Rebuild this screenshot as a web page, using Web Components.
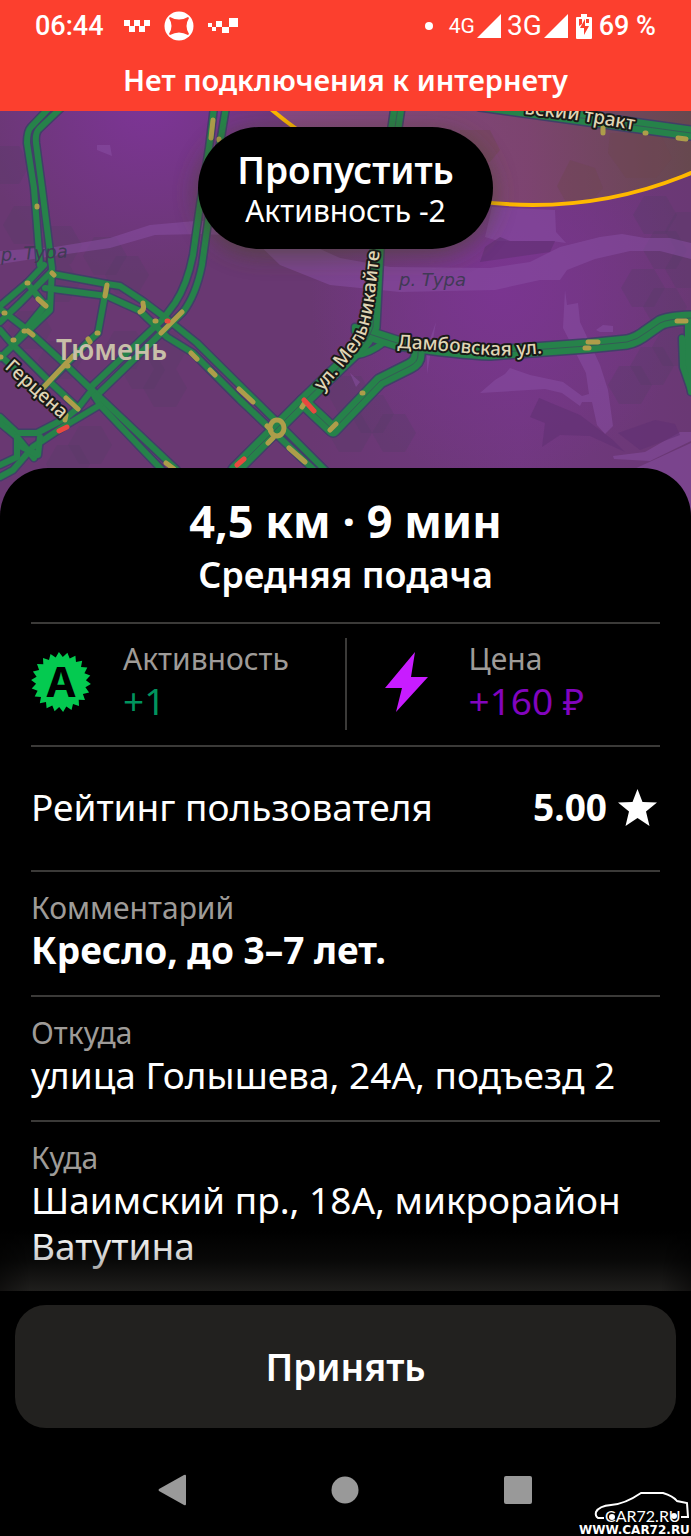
<!DOCTYPE html>
<html lang="ru">
<head>
<meta charset="utf-8">
<meta name="viewport" content="width=device-width, initial-scale=1">
<title>Новый заказ</title>
<style>
  body { margin: 0; background: #000; color: #fff; font-family: "Noto Sans", sans-serif; }
</style>
</head>
<body>
<order-screen></order-screen>

<script>
const define = (name, html, setup) => {
  const template = document.createElement('template');
  template.innerHTML = html;
  customElements.define(name, class extends HTMLElement {
    constructor() {
      super();
      this.attachShadow({ mode: 'open' }).append(template.content.cloneNode(true));
    }
    connectedCallback() { if (setup) setup(this, this.shadowRoot); }
  });
};

/* ---------- system status bar ---------- */
define('status-bar', `
<style>
  :host { display: flex; align-items: center; height: 52px; padding: 0 35px; box-sizing: border-box;
          font: 500 27px/52px Roboto, sans-serif; }
  svg { display: block; fill: #fff; flex: none; }
  .apps, .signals { display: flex; align-items: center; }
  .apps { gap: 14px; margin-left: 20px; flex: 1; }
  .signals { gap: 2px; margin-right: 7px; }
  .dot { width: 8px; height: 8px; border-radius: 50%; background: #fff; margin-right: 14px; }
  .net { font-weight: 400; }
  .s { font-size: 21px; }
  .l { font-size: 28px; margin-left: 4px; }
  .bat { margin-left: 6px; }
</style>
<span>06:44</span>
<div class="apps">
  <svg width="26" height="13" viewBox="0 0 26 13"><path d="M0 0h6v6H0zM10 0h6v6h-6zM20 0h6v6h-6zM5 6h6v6H5zM15 6h6v6h-6z"/></svg>
  <svg width="30" height="30" viewBox="0 0 30 30"><circle cx="15" cy="15" r="14.500"/><path fill="#fc3f2e" d="M6 6q9 5 18 0l1 1q-5 8 0 16l-1 1q-9-5-18 0l-1-1q5-8 0-16z"/></svg>
  <svg width="30" height="16" viewBox="0 0 30 16"><path d="M0 5h4v4H0zM4 9h4v4H4zM8 3h6v6H8zM14 9h7v6h-7zM21 0h9v9h-9z"/></svg>
</div>
<div class="signals">
  <span class="dot"></span>
  <span class="net s">4G</span>
  <svg width="24" height="24" viewBox="0 0 24 24"><path d="M24 0v24H0z"/></svg>
  <span class="net l">3G</span>
  <svg width="24" height="24" viewBox="0 0 24 24"><path d="M24 0v24H0z"/></svg>
  <svg class="bat" width="16" height="25" viewBox="0 0 16 25"><path d="M5 0h6v3h4q1 0 1 1v20q0 1-1 1H1q-1 0-1-1V4q0-1 1-1h4z"/><path d="M9 5 4 14h4v7l5-9H9z" fill="#fc3f2e"/><path d="M3 5h3v5L3 12zM10 5h3v4h-3z" fill="#fc3f2e"/></svg>
</div>
<span>69 %</span>`);

define('offline-banner', `
<style>
  :host { display: block; height: 59px; font-size: 29px; font-weight: 600; line-height: 56px; text-align: center; }
</style>
<slot></slot>`);

/* ---------- traffic map ---------- */
define('traffic-map', `
<style>
  :host { display: block; height: 407px; overflow: hidden; background: #6c3876; }
  svg { display: block; width: 100%; height: 100%; }
  text { font-family: "Noto Sans", sans-serif; }
  .case { fill: none; stroke: #413f68; stroke-width: 9; stroke-linejoin: round; stroke-linecap: round; }
  .road { fill: none; stroke: #26824a; stroke-width: 6; stroke-linejoin: round; stroke-linecap: round; }
  .wide { stroke-width: 13; } .case.wide { stroke-width: 16; }
  .seam { fill: none; stroke: #355b56; stroke-width: 1; }
  .slow { fill: none; stroke: #ad9d4a; stroke-width: 5; stroke-linecap: round; }
  .jam { fill: none; stroke: #e8493f; stroke-width: 5; stroke-linecap: round; }
  .street { font-size: 19px; font-weight: 500; fill: #e0d5b5; stroke: #191a18; stroke-width: 4; paint-order: stroke; stroke-linejoin: round; }
  .river { font: italic 18px "DejaVu Sans", sans-serif; fill: #403a55; }
</style>
<svg viewBox="0 111 691 407" preserveAspectRatio="xMidYMin slice" role="img" aria-label="Карта">
  <defs>
    <linearGradient id="tint" x1="0" y1="0" x2="1" y2="0">
      <stop offset="0" stop-color="#693872"/><stop offset=".45" stop-color="#693872"/><stop offset=".75" stop-color="#713880"/><stop offset="1" stop-color="#6a3874"/>
    </linearGradient>
    <radialGradient id="glow" cx="500" cy="290" r="190" gradientUnits="userSpaceOnUse">
      <stop offset="0" stop-color="#7a3590"/><stop offset="1" stop-color="#7a3590" stop-opacity="0"/>
    </radialGradient>
    <radialGradient id="glow2" cx="150" cy="95" r="180" gradientUnits="userSpaceOnUse">
      <stop offset="0" stop-color="#7e3498"/><stop offset="1" stop-color="#7e3498" stop-opacity="0"/>
    </radialGradient>
    <linearGradient id="zone" x1="280" y1="0" x2="691" y2="0" gradientUnits="userSpaceOnUse">
      <stop offset="0" stop-color="#8a4a86"/><stop offset=".6" stop-color="#7e466c"/><stop offset="1" stop-color="#664b48"/>
    </linearGradient>
    <filter id="soft" x="-20%" y="-40%" width="140%" height="180%"><feGaussianBlur stdDeviation="12"/></filter>
    <path id="hex" d="M-22 0-11-19H11L22 0 11 19H-11Z"/>
    <path id="p-meln" d="M322 392Q352 358 363 341 373 320 376 284L382 228"/>
    <path id="p-damb" d="M397 348Q440 350 475 354T560 351"/>
    <path id="p-tract" d="M505 112 570 119 634 130"/>
  </defs>
  <rect y="111" width="691" height="407" fill="url(#tint)"/>
  <rect y="111" width="691" height="407" fill="url(#glow)"/>
  <rect y="111" width="691" height="407" fill="url(#glow2)"/>
  <g id="cells"></g>
  <g fill="#8a50a5" opacity=".5">
    <path d="M0 251 55 247 110 238 150 225 195 221 270 221 300 240 340 258 390 267 490 268 530 262 560 247 600 237 622 234 645 238 670 238 691 243V259L660 251H630L595 259 567 270 560 280 540 280 495 290 400 292 330 285 280 265 250 236 200 234 155 235 110 248 60 255 0 264z"/>
    <path d="M492 207 555 210 556 232 566 243 552 241 520 241 498 241 485 237z"/>
    <path d="M565 290 567 305 578 303 580 322 600 365 608 390 613 426 605 434 597 425 592 402 582 402 580 406 562 393 545 389 480 393 495 380 505 374 510 368 530 375 563 382 582 396 589 394 586 373 563 328z"/>
    <path d="M613 456 645 452 680 432H691V441L650 461 614 459zM632 470 691 443V518H670zM97 145 110 145 112 156 97 150zM596 330 603 325 613 326V332L600 332zM427 348 436 322 427 374zM350 373 360 382 356 387z"/>
  </g>
  <g fill="#603073" opacity=".6"><path d="M485 247 500 237 510 241 555 241 550 252 480 262zM539 398 530 417 545 423 542 447 560 435 590 436 625 452 613 440 580 415zM618 433 655 420 675 424 680 435 640 450z"/></g>
  <circle cx="533" cy="-201" r="406" fill="url(#zone)" fill-opacity=".85"/>
  <g fill="#6d474f" opacity=".4">
    <path d="M460 130h30l10 20-10 12h-30zM570 160l25 8 8 20-14 16h-22l-10-18zM610 133h50l12 25-16 20h-30l-18-25z"/>
  </g>
  <g id="roads"></g>
  <g class="slow">
    <path d="M213 120 211 138M219 139v1M37 206v1M52 273l2 2M27 283h1M38 299 46 306M107 285 105 296M143 303v1M143 304q2 6-3 8M155 321h1M182 312 161 333M191 353 197 359M210 370 215 375M4 313h1M24 331h1M28 331 33 335M13 340h1M0 357h1M97 333h1M88 339 90 342M73 356 42 389M67 366h1M66 398 78 409M65 420 66 415M166 463 174 469M239 389 253 402M289 448 305 462M267 426l4 4M268 443 273 438M302 407 304 404M330 430 336 424M362 393h1M421 345h1M603 128v5M645 133h1M678 138 686 139M588 342h10M585 348h4M677 321h9"/>
    <ellipse cx="277" cy="428" rx="7" ry="8"/>
  </g>
  <path class="jam" d="M59 431 67 427M167 321h1M304 400 314 411M237 465 244 459"/>
  <circle cx="533" cy="-201" r="406" fill="none" stroke="#ffb800" stroke-width="4"/>
  <rect x="198" y="132" width="295" height="122" rx="61" fill="#49472c" opacity=".65" filter="url(#soft)"/>
  <text class="river" transform="rotate(-3 0 260)" x="1" y="261">р. Тура</text>
  <text class="river" x="399" y="286">р. Тура</text>
  <text class="street"><textPath href="#p-meln">ул. Мельникайте</textPath></text>
  <text class="street"><textPath href="#p-damb">Дамбовская ул.</textPath></text>
  <text class="street"><textPath href="#p-tract" startOffset="100%" text-anchor="end">ьский тракт</textPath></text>
  <text class="street" transform="translate(4 368) rotate(42)">Герцена</text>
  <text x="56" y="360" font-size="28" font-weight="600" fill="#c8bfa8">Тюмень</text>
</svg>`, (host, root) => {
  const cells = [[127,275],[105,256],[25,225],[60,245],[58,283],[165,350],[165,388],[143,370],[60,360],[90,445],[68,464],[30,330],[125,350],[8,165],[630,385],[652,366],[674,347],[665,250],[687,231],[687,269],[655,215],[643,288],[665,307],[350,395],[372,414],[350,433],[394,433]];
  root.getElementById('cells').innerHTML =
    cells.map(([x, y]) => `<use href="#hex" x="${x}" y="${y}" fill="#573c68" opacity=".3"/>`).join('');
  const lanes = [
    'M50 107 31 127Q27 131 27 143L34 188 40 265',
    'M62 107 39 129Q35 133 36 143L42 188 52 268 50 310 0 358',
    'M214 107 209 148 200 205 193 255Q187 285 175 303L163 319 90 388',
    'M226 107 219 150 209 215 202 265Q196 295 183 312L95 397',
    'M53 274 107 284 120 286 143 301 167 319 197 343 277 422 327 472',
    'M45 288 107 296 140 311 167 337 193 353 240 400 315 471',
    'M107 284 98 333 88 342 42 389', 'M44 265 27 283 0 306', 'M51 272 20 303 0 322', 'M27 283 46 306',
    'M0 309 30 332 67 366 92 390 177 470', 'M0 330 13 345 50 382 78 408', 'M0 355 67 418',
    'M92 392 100 405 162 470', 'M47 303 14 343', 'M100 405 63 427 33 447 13 470 0 477',
    'M92 390 78 408 66 418 37 433H17L0 417', 'M0 423 17 437 34 458', 'M17 437V457L0 465', 'M40 437 38 455 20 446',
    'M355 331V327L377 335', 'M357 355Q370 353 383 343', 'M688 320V372L691 392', 'M682 338 683 367 691 390'
  ];
  const wide = [
    'M398 107 377 250 373 327Q368 342 355 352L303 402 235 470', 'M360 331 397 343Q460 352 490 353L587 346 627 342Q637 340 647 332L660 323Q667 319 691 318',
    'M418 347V355Q418 362 410 366L380 381 333 430 303 402', 'M480 104 691 133'
  ];
  const draw = (list, cls) => list.map(d => `<path class="${cls}" d="${d}"/>`).join('');
  root.getElementById('roads').innerHTML =
    draw(lanes, 'case') + draw(wide, 'case wide') + draw(lanes, 'road') + draw(wide, 'road wide') + draw(wide, 'seam');
});

/* ---------- skip pill ---------- */
define('skip-button', `
<style>
  :host { display: block; }
  button { display: block; min-width: 295px; height: 122px; padding: 4px 38px 0; border: 0; border-radius: 61px; background: #000;
           color: #fff; font: 600 37px/42px "Noto Sans", sans-serif; cursor: pointer; }
  small { display: block; font-size: 30px; font-weight: 400; line-height: 40px; }
</style>
<button type="button"><slot></slot><small><slot name="note"></slot></small></button>`);

/* ---------- order details ---------- */
define('trip-summary', `
<style>
  :host { display: block; padding: 23px 0 24px; text-align: center; }
  h1, p { margin: 0; }
  h1 { font-size: 45px; font-weight: 700; line-height: 60px; }
  p { font-size: 36px; font-weight: 600; line-height: 47px; }
</style>
<h1><slot></slot></h1><p><slot name="note"></slot></p>`);

define('stat-item', `
<style>
  :host { display: flex; align-items: center; gap: 32px; }
  .icon { width: 60px; height: 60px; flex: none; }
  .label { font-size: 30px; line-height: 38px; color: #9e9b98; }
  .value { font-size: 37px; line-height: 46px; color: var(--accent); }
</style>
<div class="icon"><slot name="icon"></slot></div>
<div><div class="label"><slot name="label"></slot></div><div class="value"><slot></slot></div></div>`);

define('bonus-stats', `
<style>
  :host { display: grid; grid-template-columns: 1fr 2px 1fr; border-top: 2px solid #3b3a38; padding: 16px 0 21px; }
  .rule { background: #3b3a38; margin: -2px 0 -6px; }
  stat-item:first-of-type { --accent: #00945e; }
  stat-item:last-of-type { --accent: #8204be; padding-left: 30px; }
  svg { display: block; }
  text { font: bold 42px "Noto Sans", sans-serif; }
</style>
<stat-item>
  <svg slot="icon" id="badge" width="60" height="60" viewBox="-30 -30 60 60"><polygon fill="#04ca50"/><text y="15" text-anchor="middle">A</text></svg>
  <span slot="label">Активность</span>+1
</stat-item>
<div class="rule"></div>
<stat-item>
  <svg slot="icon" width="60" height="60" viewBox="0 0 60 60"><path fill="#c81cff" d="M38 0 8 36H25L19 60 51 25H34z"/></svg>
  <span slot="label">Цена</span>+160 ₽
</stat-item>`, (host, root) => {
  const teeth = 22, points = [];
  for (let i = 0; i < teeth * 2; i++) {
    const angle = Math.PI * (i + .5) / teeth, r = i % 2 ? 25 : 30;
    points.push((Math.cos(angle) * r).toFixed(1) + ',' + (Math.sin(angle) * r).toFixed(1));
  }
  root.querySelector('#badge polygon').setAttribute('points', points.join(' '));
});

define('user-rating', `
<style>
  :host { display: flex; align-items: center; height: 123px; border-top: 2px solid #3b3a38; font-size: 37px; line-height: 46px; }
  .name, b { padding-bottom: 3px; }
  .name { flex: 1; }
  b { font-weight: 700; }
  svg { display: block; margin: 0 3px 2px 11px; }
</style>
<span class="name"><slot></slot></span><b><slot name="score"></slot></b>
<svg width="39" height="37" viewBox="0 0 39 37"><path fill="#fff" d="M19.500 0 24.500 13 39 13.500 28 22.500 31.500 37 19.500 29 7.500 37 11 22.500 0 13.500 14.500 13z"/></svg>`);

define('detail-row', `
<style>
  :host { display: block; border-top: 2px solid #3b3a38; padding: 17px 0 22px; font-size: 37px; line-height: 46px; }
  .label { font-size: 30px; line-height: 38px; font-weight: 400; color: #9e9b98; }
  :host([strong]) .value { font-weight: 700; }
</style>
<div class="label"><slot name="label"></slot></div><div class="value"><slot></slot></div>`);

define('order-sheet', `
<style>
  :host { display: block; position: relative; margin-top: -50px; padding: 0 31px; border-radius: 48px 48px 0 0; background: #000; }
  .fade { position: absolute; left: 0; right: 0; bottom: 0; height: 60px;
          background: linear-gradient(to bottom, #24232100, #24232140 50%, #242321e0);
          -webkit-mask: linear-gradient(to right, #0008, #000 30px, #000 calc(100% - 30px), #0008); }
</style>
<slot></slot><div class="fade"></div>`);

define('accept-button', `
<style>
  :host { display: block; padding: 14px 15px 0; }
  button { display: block; width: 100%; height: 123px; border: 0; border-radius: 31px; background: #22211f; color: #fff;
           font: 600 37px/46px "Noto Sans", sans-serif; cursor: pointer; }
</style>
<button type="button"><slot></slot></button>`);

/* ---------- system navigation ---------- */
define('system-nav', `
<style>
  :host { display: flex; justify-content: center; gap: 117px; padding: 34px 2px 19px 0; }
  button { display: grid; place-items: center; width: 56px; height: 56px; padding: 0; border: 0; background: none; }
  svg { fill: #999; display: block; }
</style>
<button type="button" aria-label="Назад"><svg width="28" height="32" viewBox="0 0 28 32"><path d="M26 1q2-1 2 1v28q0 2-2 1L1 17q-1-1 0-2z"/></svg></button>
<button type="button" aria-label="Домой"><svg width="28" height="28" viewBox="0 0 28 28"><circle cx="14" cy="14" r="13.500"/></svg></button>
<button type="button" aria-label="Недавние"><svg width="30" height="30" viewBox="0 0 30 30"><rect x="1" y="1" width="28" height="28" rx="2"/></svg></button>`);

define('site-mark', `
<style>
  :host { position: absolute; right: 0; bottom: 0; }
  svg { display: block; }
  text { fill: #fff; }
  .name { font: 16px Lato, sans-serif; }
  .url { font: bold 12px "DejaVu Sans", sans-serif; }
</style>
<svg width="113" height="48" viewBox="0 0 113 48">
  <path d="M26 29H20q-3-2-2-6 3-6 15-7 14-1 30-12l22 0q10 3 14 8l10 2 1 14h-7" fill="none" stroke="#fff" stroke-width="2"/>
  <text class="name" x="27" y="33">CAR72.RU</text>
  <circle cx="34" cy="28" r="3" fill="#fff"/><circle cx="96" cy="27" r="3" fill="#fff"/>
  <text class="url" x="1" y="45">WWW.CAR72.RU</text>
</svg>`);

define('order-screen', `
<style>
  :host { display: block; position: relative; background: #000; }
  header { background: #fc3f2e; }
  .stage { display: grid; }
  .stage > * { grid-area: 1 / 1; }
  skip-button { justify-self: center; align-self: start; margin-top: 16px; z-index: 1; }
</style>
<header><status-bar></status-bar><offline-banner>Нет подключения к интернету</offline-banner></header>
<div class="stage">
  <traffic-map></traffic-map>
  <skip-button>Пропустить<span slot="note">Активность -2</span></skip-button>
</div>
<order-sheet>
  <trip-summary>4,5 км · 9 мин<span slot="note">Средняя подача</span></trip-summary>
  <bonus-stats></bonus-stats>
  <user-rating>Рейтинг пользователя<span slot="score">5.00</span></user-rating>
  <detail-row strong><span slot="label">Комментарий</span>Кресло, до 3–7 лет.</detail-row>
  <detail-row><span slot="label">Откуда</span>улица Голышева, 24А, подъезд 2</detail-row>
  <detail-row><span slot="label">Куда</span>Шаимский пр., 18А, микрорайон Ватутина</detail-row>
</order-sheet>
<accept-button>Принять</accept-button>
<system-nav></system-nav>
<site-mark></site-mark>`);
</script>
</body>
</html>
